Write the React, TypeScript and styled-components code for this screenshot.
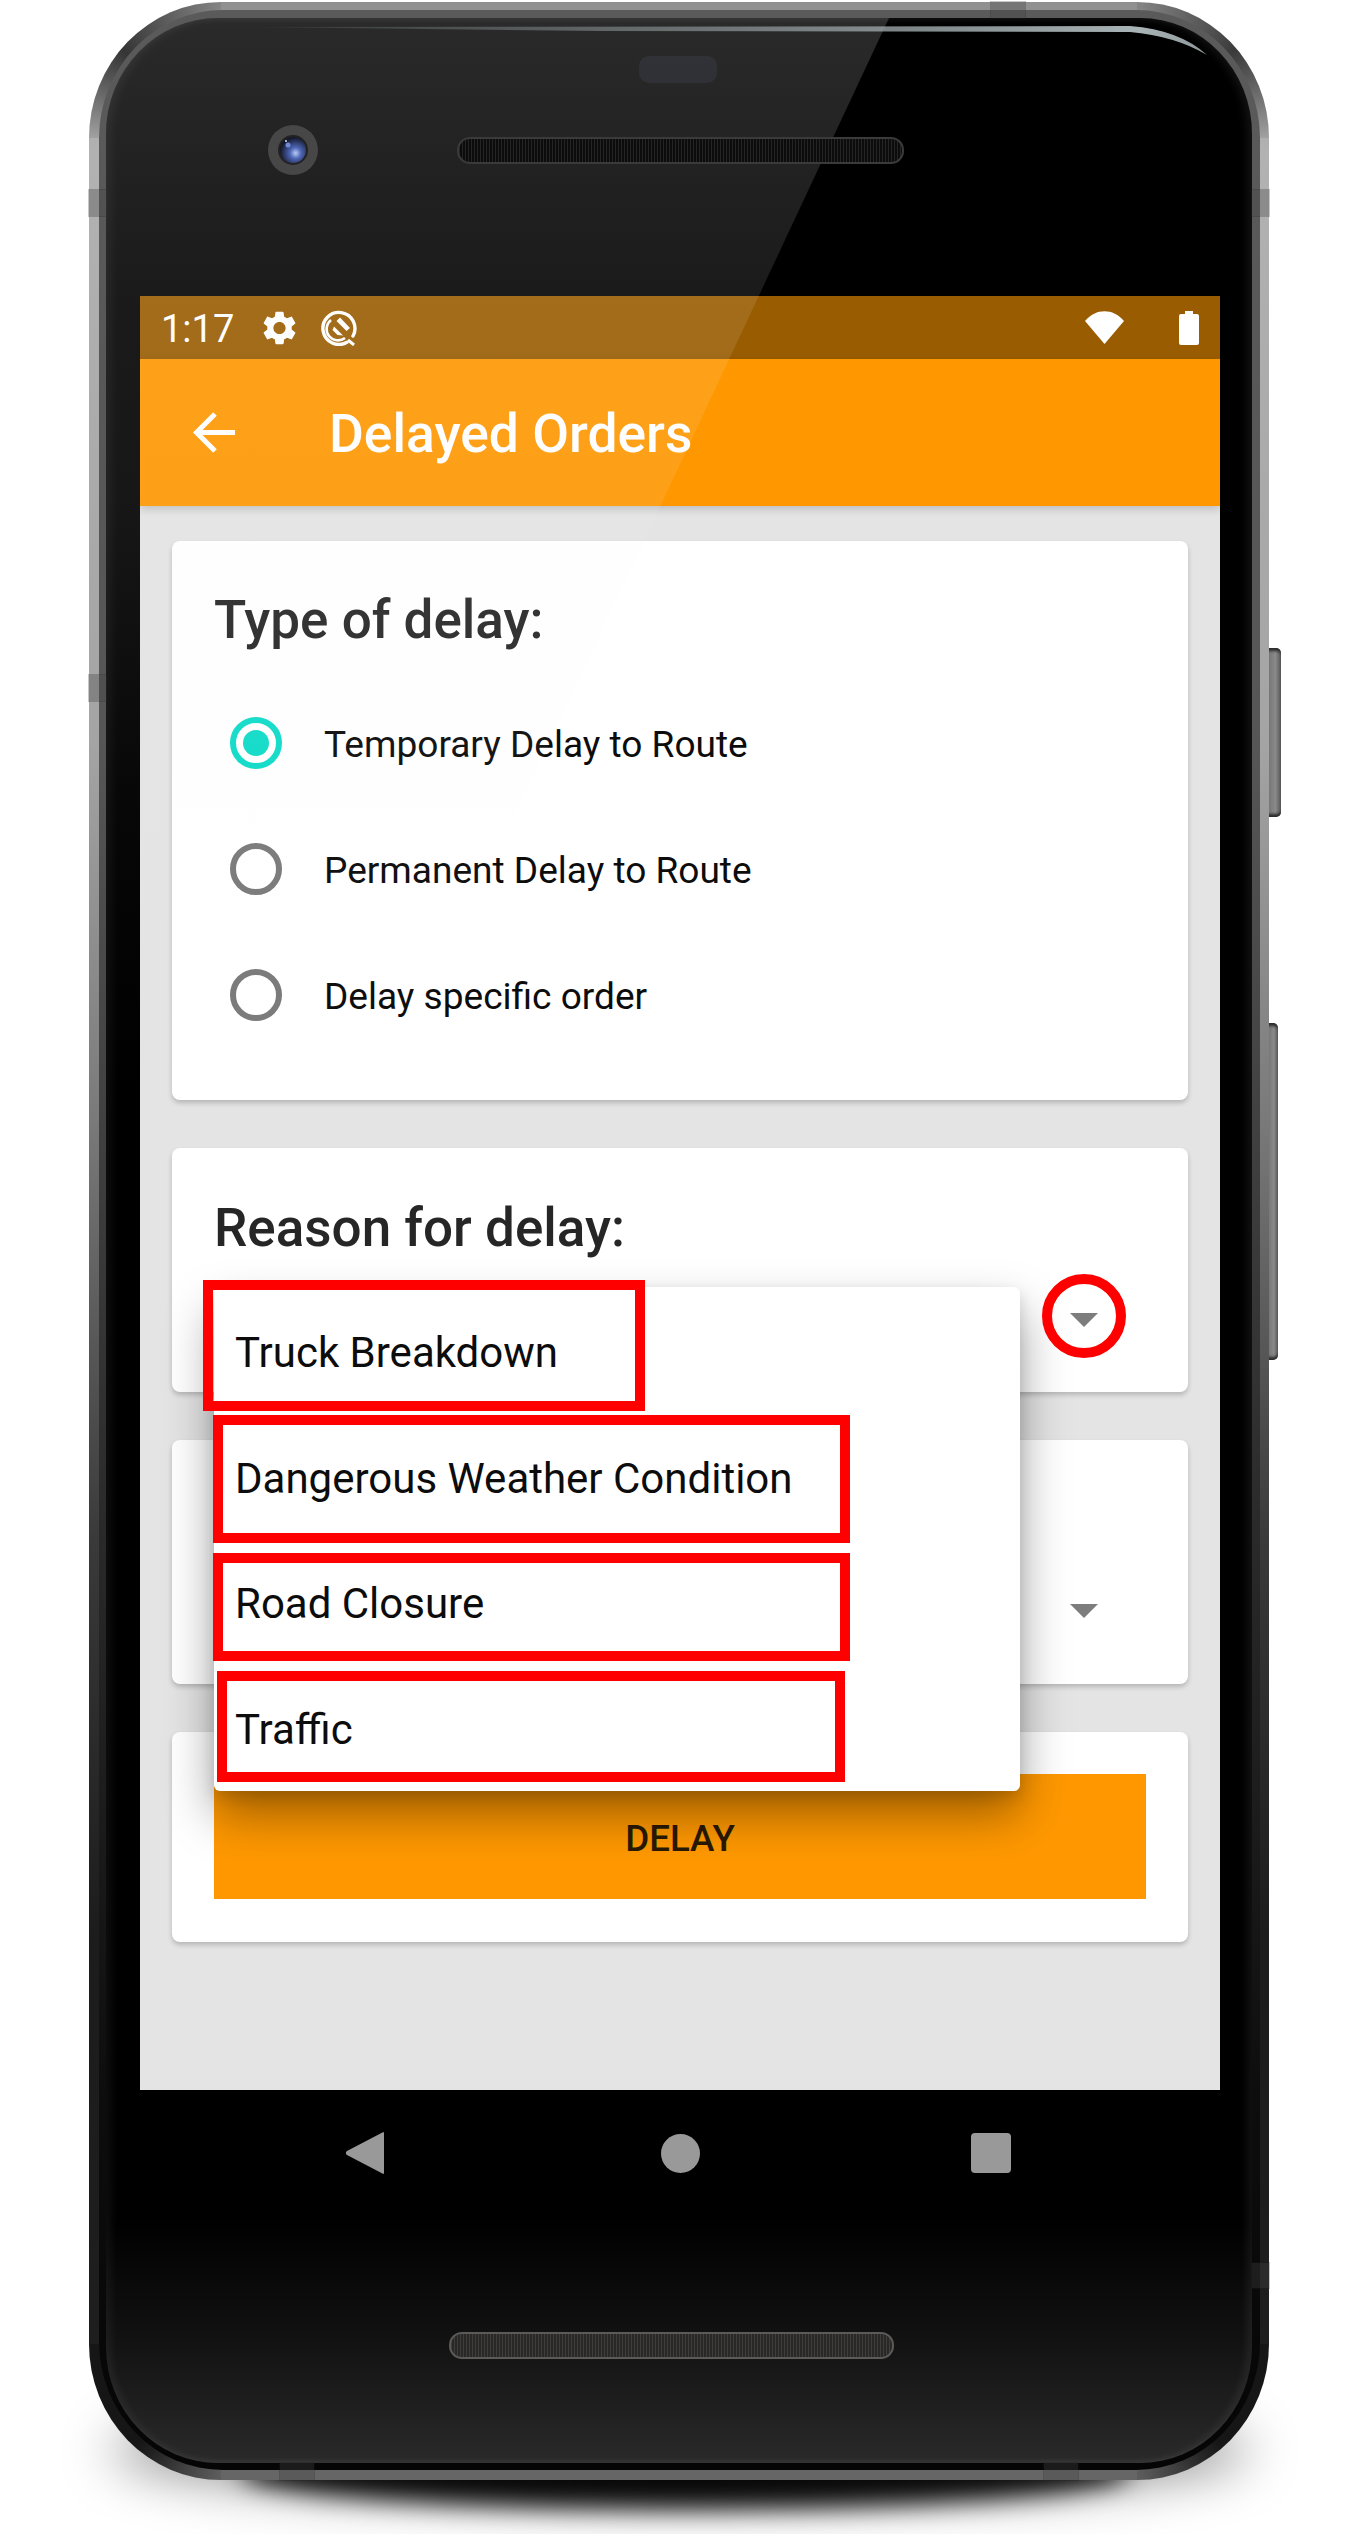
import React from 'react';
import styled, {createGlobalStyle} from 'styled-components';

const GlobalStyle = createGlobalStyle`
  html, body {
    margin: 0;
    padding: 0;
    background: #fff;
    font-family: Roboto, "Liberation Sans", sans-serif;
  }
`;

const Page = styled.div`
  position: relative;
  width: 1370px;
  height: 2534px;
  padding: 2px 0 0 89px;
  box-sizing: border-box;
  overflow: hidden;
`;

const GroundShadow = styled.div<{$wide?: boolean}>`
  position: absolute;
  left: ${({$wide}) => ($wide ? 110 : 240)}px;
  width: ${({$wide}) => ($wide ? 1140 : 890)}px;
  top: ${({$wide}) => ($wide ? 2400 : 2436)}px;
  height: ${({$wide}) => ($wide ? 100 : 72)}px;
  border-radius: 50%;
  background: rgba(0, 0, 0, ${({$wide}) => ($wide ? 0.45 : 0.95)});
  filter: blur(${({$wide}) => ($wide ? 26 : 12)}px);
`;

const Phone = styled.div`
  position: relative;
  width: 1180px;
  height: 2478px;
  padding: 8px 9px 10px 10px;
  box-sizing: border-box;
  border-radius: 132px / 136px;
  background:
    conic-gradient(from 270deg at 132px 136px, rgba(35, 35, 35, 0.1) 0deg, rgba(35, 35, 35, 0.85) 42deg, rgba(35, 35, 35, 0.1) 90deg, transparent 90deg),
    conic-gradient(from 0deg at calc(100% - 132px) 136px, rgba(35, 35, 35, 0.1) 0deg, rgba(35, 35, 35, 0.8) 48deg, rgba(35, 35, 35, 0.1) 90deg, transparent 90deg),
    conic-gradient(from 180deg at 132px calc(100% - 136px), rgba(22, 22, 22, 0.1) 0deg, rgba(22, 22, 22, 1) 40deg, rgba(22, 22, 22, 1) 90deg, transparent 90deg),
    conic-gradient(from 90deg at calc(100% - 132px) calc(100% - 136px), rgba(22, 22, 22, 1) 0deg, rgba(22, 22, 22, 1) 50deg, rgba(22, 22, 22, 0.1) 90deg, transparent 90deg),
    linear-gradient(
      to bottom,
      #8f8f8f 0%,
      #b2b2b2 6%,
      #a4a4a4 30%,
      #7a7a7a 45%,
      #3a3a3a 62%,
      #1c1c1c 78%,
      #1e1e1e 95%,
      #666 99.5%
    );
`;

const Rim = styled.div`
  height: 100%;
  padding: 8px 8px 7px 7px;
  box-sizing: border-box;
  border-radius: 124px / 128px;
  background: linear-gradient(to bottom, #5a5a5a 0%, #565656 30%, #2c2c2c 60%, #0d0d0d 85%, #050505 100%);
`;

const Glass = styled.div`
  position: relative;
  height: 100%;
  padding: 0 32px 0 34px;
  box-sizing: border-box;
  overflow: hidden;
  border-radius: 112px / 116px;
  background: linear-gradient(to bottom, #000 0%, #000 90%, #121212 95%, #2a2a2a 100%);
  box-shadow: inset 5px 0 8px rgba(255, 255, 255, 0.06), inset -5px 0 8px rgba(255, 255, 255, 0.07);
`;

const TopBezel = styled.div`
  height: 278px;
  box-sizing: border-box;
  padding-top: 38px;
`;

const Sensor = styled.div`
  width: 78px;
  height: 27px;
  margin-left: 499px;
  border-radius: 10px;
  background: #0a0c12;
`;

const LensRow = styled.div`
  position: relative;
  z-index: 11;
  display: flex;
  align-items: center;
  gap: 139px;
  margin: 42px 0 0 128px;
`;

const Speaker = styled.div<{$lit?: boolean}>`
  width: ${({$lit}) => ($lit ? 445 : 447)}px;
  height: 27px;
  box-sizing: border-box;
  border-radius: 13px;
  background-color: ${({$lit}) => ($lit ? '#2a2826' : '#0c0c0c')};
  background-image: repeating-linear-gradient(90deg, rgba(255, 255, 255, 0.1) 0 1px, transparent 1px 3px);
  border: 2px solid ${({$lit}) => ($lit ? '#5c5a58' : '#3a3a3a')};
`;

const Screen = styled.div`
  height: 1794px;
  display: flex;
  flex-direction: column;
  background: #e4e4e4;
`;

const StatusBar = styled.div`
  height: 63px;
  flex: none;
  display: flex;
  align-items: center;
  padding: 0 21px 0 21px;
  background: #995c00;
  color: #fff;
`;

const Time = styled.span`
  padding-top: 2px;
  font-size: 38px;
  margin-right: 29px;
`;

const StatusIcons = styled.div`
  display: flex;
  align-items: center;
  gap: 25px;
`;

const StatusRight = styled(StatusIcons)`
  margin-left: auto;
  gap: 55px;
`;

const AppBar = styled.div`
  height: 147px;
  flex: none;
  display: flex;
  align-items: center;
  gap: 94px;
  padding-left: 53px;
  background: #ff9800;
  box-shadow: 0 3px 8px rgba(0, 0, 0, 0.18);
  position: relative;
  z-index: 1;
`;

const Title = styled.h1`
  margin: 0;
  padding-top: 2px;
  font-size: 53.4px;
  font-weight: 500;
  color: #fff;
`;

const Content = styled.div`
  display: flex;
  flex-direction: column;
  gap: 48px;
  padding: 35px 32px 0;
`;

const Card = styled.section<{$raised?: boolean}>`
  position: relative;
  z-index: ${({$raised}) => ($raised ? 2 : 0)};
  padding: 48px 42px 42px;
  background: #fff;
  border-radius: 8px;
  box-shadow: 0 3px 5px rgba(0, 0, 0, 0.2);
`;

const SpinnerCard = styled(Card)`
  height: 244px;
  padding: 49px 42px 0;
  box-sizing: border-box;
`;

const ButtonCard = styled(Card)`
  padding: 42px 42px 43px;
`;

const Heading = styled.h2`
  margin: 0;
  font-size: 53px;
  line-height: 62px;
  font-weight: 500;
  color: #262626;
`;

const RadioGroup = styled.div`
  margin-top: 29px;
  padding-left: 16px;
`;

const RadioRow = styled.div`
  height: 126px;
  display: flex;
  align-items: center;
  gap: 42px;
  font-size: 37.05px;
  color: #0c0c0c;
`;

const RadioLabel = styled.span`
  padding-top: 2px;
`;

const RadioCircle = styled.span<{$checked?: boolean}>`
  flex: none;
  width: 52px;
  height: 52px;
  box-sizing: border-box;
  display: flex;
  align-items: center;
  justify-content: center;
  border-radius: 50%;
  border: 6px solid ${({$checked}) => ($checked ? '#0fdbc8' : '#7a7a7a')};

  &:after {
    content: '';
    display: ${({$checked}) => ($checked ? 'block' : 'none')};
    width: 26px;
    height: 26px;
    border-radius: 50%;
    background: #0fdbc8;
  }
`;

const SpinnerRow = styled.div<{$offset?: number}>`
  height: 120px;
  margin-top: ${({$offset}) => $offset ?? 1}px;
  display: flex;
  align-items: center;
  justify-content: flex-end;
  padding-right: 48px;
`;

const Caret = styled.span`
  width: 0;
  height: 0;
  border-left: 14px solid transparent;
  border-right: 14px solid transparent;
  border-top: 14px solid #7d7d7d;
`;

const Menu = styled.ul`
  position: absolute;
  left: 42px;
  top: 139px;
  width: 806px;
  height: 504px;
  margin: 0;
  padding: 1px 0 0;
  box-sizing: border-box;
  list-style: none;
  display: flex;
  flex-direction: column;
  background: #fff;
  border-radius: 6px;
  box-shadow: 0 24px 48px rgba(0, 0, 0, 0.38), 0 6px 14px rgba(0, 0, 0, 0.12);
`;

const MenuItem = styled.li`
  flex: 1;
  display: flex;
  align-items: center;
  padding: 3px 0 0 21px;
  font-size: 42px;
  color: #0c0c0c;
`;

const DelayButton = styled.button`
  display: block;
  width: 100%;
  height: 125px;
  padding: 3px 0 0;
  border: 0;
  background: #ff9800;
  font-family: inherit;
  font-size: 36.75px;
  font-weight: 500;
  color: #2a1a04;
`;

const NavBar = styled.div`
  display: flex;
  align-items: center;
  gap: 274px;
  padding: 42px 0 0 206px;
`;

const NavCircle = styled.svg`
  margin: 0 -3px 0 3px;
`;

const BottomSpeakerWrap = styled.div`
  margin: 158px 0 0 309px;
`;

const Overlay = styled.svg`
  position: absolute;
  left: 0;
  top: 0;
  width: 100%;
  height: 100%;
  z-index: 10;
  pointer-events: none;
`;

const Notch = styled.div<{$x: number; $y: number; $w: number; $h: number}>`
  position: absolute;
  left: ${({$x}) => $x - 89}px;
  top: ${({$y}) => $y - 2}px;
  width: ${({$w}) => $w}px;
  height: ${({$h}) => $h}px;
  background: rgba(70, 70, 70, 0.35);
  box-shadow: 0 0 0 1px rgba(30, 30, 30, 0.25);
`;

const SideButton = styled.div<{$top: number; $height: number; $depth: number}>`
  position: absolute;
  right: ${({$depth}) => -$depth}px;
  top: ${({$top}) => $top - 2}px;
  width: ${({$depth}) => $depth}px;
  height: ${({$height}) => $height}px;
  border-radius: 0 5px 5px 0;
  background: linear-gradient(to right, #777, #8a8a8a 55%, #555);
  box-shadow: inset 0 6px 3px -3px #2a2a2a, inset 0 -6px 3px -3px #2a2a2a;
`;

const RedBox = styled.div<{$x: number; $y: number; $w: number; $h: number; $round?: boolean}>`
  position: absolute;
  left: ${({$x}) => $x}px;
  top: ${({$y}) => $y}px;
  width: ${({$w}) => $w}px;
  height: ${({$h}) => $h}px;
  box-sizing: border-box;
  border: 10px solid #f00;
  border-radius: ${({$round}) => ($round ? '50%' : '0')};
  z-index: 20;
`;

const GEAR = 'M19.14 12.94c.04-.3.06-.61.06-.94 0-.32-.02-.64-.07-.94l2.03-1.58c.18-.14.23-.41.12-.61l-1.92-3.32c-.12-.22-.37-.29-.59-.22l-2.39.96c-.5-.38-1.03-.7-1.62-.94l-.36-2.54c-.04-.24-.24-.41-.48-.41h-3.84c-.24 0-.43.17-.47.41l-.36 2.54c-.59.24-1.13.57-1.62.94l-2.39-.96c-.22-.08-.47 0-.59.22L2.74 8.87c-.12.21-.08.47.12.61l2.03 1.58c-.05.3-.09.63-.09.94s.02.64.07.94l-2.03 1.58c-.18.14-.23.41-.12.61l1.92 3.32c.12.22.37.29.59.22l2.39-.96c.5.38 1.03.7 1.62.94l.36 2.54c.05.24.24.41.48.41h3.84c.24 0 .44-.17.47-.41l.36-2.54c.59-.24 1.13-.56 1.62-.94l2.39.96c.22.08.47 0 .59-.22l1.92-3.32c.12-.22.07-.47-.12-.61l-2.01-1.58zM12 15.6c-1.98 0-3.6-1.62-3.6-3.6s1.62-3.6 3.6-3.6 3.6 1.62 3.6 3.6-1.62 3.6-3.6 3.6z';

const Camera = () => (
  <svg width="50" height="50" viewBox="0 0 50 50">
    <defs>
      <radialGradient id="lens" cx="0.6" cy="0.62" r="0.6">
        <stop offset="0" stopColor="#b9cdf5" />
        <stop offset="0.35" stopColor="#4f68b8" />
        <stop offset="1" stopColor="#14182a" />
      </radialGradient>
    </defs>
    <circle cx="25" cy="25" r="25" fill="#474747" />
    <circle cx="25" cy="25" r="15" fill="#222" />
    <circle cx="25" cy="25" r="13" fill="url(#lens)" />
    <circle cx="20" cy="20" r="2.5" fill="#6f8ad6" />
    <circle cx="18" cy="16" r="1" fill="#cfe0ff" />
  </svg>
);

const QIcon = () => (
  <svg width="37" height="37" viewBox="0 0 37 37" fill="none">
    <path d="M26 33.2A16 16 0 1 1 32 27" stroke="#fff" strokeWidth="3.4" strokeLinecap="round" />
    <path d="M24 29A11 11 0 0 1 10 11" stroke="#fff" strokeWidth="2.6" />
    <path d="M19 8.5L29 19 25.5 22 15.5 12Z" fill="#fff" />
    <path d="M13 17.5L22 26.5 16.5 26 11.5 21Z" fill="#fff" />
    <path d="M27 31L33 36" stroke="#fff" strokeWidth="3" />
  </svg>
);

const reasons = ['Truck Breakdown', 'Dangerous Weather Condition', 'Road Closure', 'Traffic'];
const delayTypes = ['Temporary Delay to Route', 'Permanent Delay to Route', 'Delay specific order'];

const notches = [
  {x: 89, y: 190, w: 17, h: 26},
  {x: 89, y: 675, w: 17, h: 26},
  {x: 1252, y: 190, w: 17, h: 26},
  {x: 1252, y: 2263, w: 17, h: 25},
  {x: 991, y: 2, w: 34, h: 16},
  {x: 280, y: 2463, w: 34, h: 17},
  {x: 1044, y: 2463, w: 34, h: 17},
];

const App = () => (
  <Page>
    <GlobalStyle />
    <GroundShadow $wide />
    <GroundShadow />
    <Phone>
      <Rim>
        <Glass>
          <TopBezel>
            <Sensor />
            <LensRow>
              <Camera />
              <Speaker />
            </LensRow>
          </TopBezel>
          <Screen>
            <StatusBar>
              <Time>1:17</Time>
              <StatusIcons>
                <svg width="33" height="34" viewBox="2.5 2 19 20" fill="#fff">
                  <path d={GEAR} />
                </svg>
                <QIcon />
              </StatusIcons>
              <StatusRight>
                <svg width="39" height="33" viewBox="0 0 39 33" fill="#fff">
                  <path d="M0 10C11-3 28-3 39 10L19.5 33Z" />
                </svg>
                <svg width="20" height="34" viewBox="0 0 20 34" fill="#fff">
                  <path d="M6 0h8v3h4a2 2 0 0 1 2 2v27a2 2 0 0 1-2 2H2a2 2 0 0 1-2-2V5a2 2 0 0 1 2-2h4Z" />
                </svg>
              </StatusRight>
            </StatusBar>
            <AppBar>
              <svg width="42" height="41" viewBox="0 0 42 41" fill="none" stroke="#fff" strokeWidth="5">
                <path d="M42 20.5H4M22 2L3.5 20.5 22 39" />
              </svg>
              <Title>Delayed Orders</Title>
            </AppBar>
            <Content>
              <Card>
                <Heading>Type of delay:</Heading>
                <RadioGroup>
                  {delayTypes.map((type, i) => (
                    <RadioRow key={type}>
                      <RadioCircle $checked={i === 0} />
                      <RadioLabel>{type}</RadioLabel>
                    </RadioRow>
                  ))}
                </RadioGroup>
              </Card>
              <SpinnerCard $raised>
                <Heading>Reason for delay:</Heading>
                <SpinnerRow>
                  <Caret />
                </SpinnerRow>
                <Menu>
                  {reasons.map(reason => (
                    <MenuItem key={reason}>{reason}</MenuItem>
                  ))}
                </Menu>
              </SpinnerCard>
              <SpinnerCard>
                <SpinnerRow $offset={62}>
                  <Caret />
                </SpinnerRow>
              </SpinnerCard>
              <ButtonCard>
                <DelayButton>DELAY</DelayButton>
              </ButtonCard>
            </Content>
          </Screen>
          <NavBar>
            <svg width="38" height="42" viewBox="0 0 38 42" fill="#999">
              <path d="M38 1v40a1 1 0 0 1-1.6.6L1 23a2.4 2.4 0 0 1 0-4L36.4.4A1 1 0 0 1 38 1Z" />
            </svg>
            <NavCircle width="39" height="39" viewBox="0 0 39 39" fill="#999">
              <circle cx="19.5" cy="19.5" r="19.5" />
            </NavCircle>
            <svg width="40" height="40" viewBox="0 0 40 40" fill="#999">
              <rect width="40" height="40" rx="4" />
            </svg>
          </NavBar>
          <BottomSpeakerWrap>
            <Speaker $lit />
          </BottomSpeakerWrap>
          <Overlay viewBox="106 18 1146 2445" preserveAspectRatio="none">
            <defs>
              <linearGradient id="sheen" gradientUnits="userSpaceOnUse" x1="0" y1="18" x2="0" y2="1100">
                <stop offset="0" stopColor="#f0f0f0" stopOpacity="0.175" />
                <stop offset="0.26" stopColor="#f0f0f0" stopOpacity="0.11" />
                <stop offset="0.45" stopColor="#f0f0f0" stopOpacity="0.095" />
                <stop offset="0.72" stopColor="#f0f0f0" stopOpacity="0.03" />
                <stop offset="1" stopColor="#f0f0f0" stopOpacity="0" />
              </linearGradient>
              <linearGradient id="glare" gradientUnits="userSpaceOnUse" x1="246" y1="0" x2="1207" y2="0">
                <stop offset="0" stopColor="#9fa9ab" stopOpacity="0.1" />
                <stop offset="0.5" stopColor="#9fa9ab" stopOpacity="0.6" />
                <stop offset="0.93" stopColor="#a9b4b6" />
                <stop offset="1" stopColor="#8d979a" />
              </linearGradient>
            </defs>
            <polygon points="889,18 382,1100 106,1100 106,18" fill="url(#sheen)" />
            <path d="M246 27L1130 26Q1180 30 1207 55Q1175 36 1130 32L600 31Z" fill="url(#glare)" />
          </Overlay>
        </Glass>
      </Rim>
      {notches.map(n => (
        <Notch key={`${n.x}-${n.y}`} $x={n.x} $y={n.y} $w={n.w} $h={n.h} />
      ))}
      <SideButton $top={648} $height={169} $depth={12} />
      <SideButton $top={1023} $height={337} $depth={9} />
    </Phone>
    <RedBox $x={203} $y={1280} $w={442} $h={131} />
    <RedBox $x={213} $y={1415} $w={637} $h={128} />
    <RedBox $x={213} $y={1553} $w={637} $h={108} />
    <RedBox $x={217} $y={1671} $w={628} $h={111} />
    <RedBox $x={1042} $y={1274} $w={84} $h={84} $round />
  </Page>
);

export default App;
